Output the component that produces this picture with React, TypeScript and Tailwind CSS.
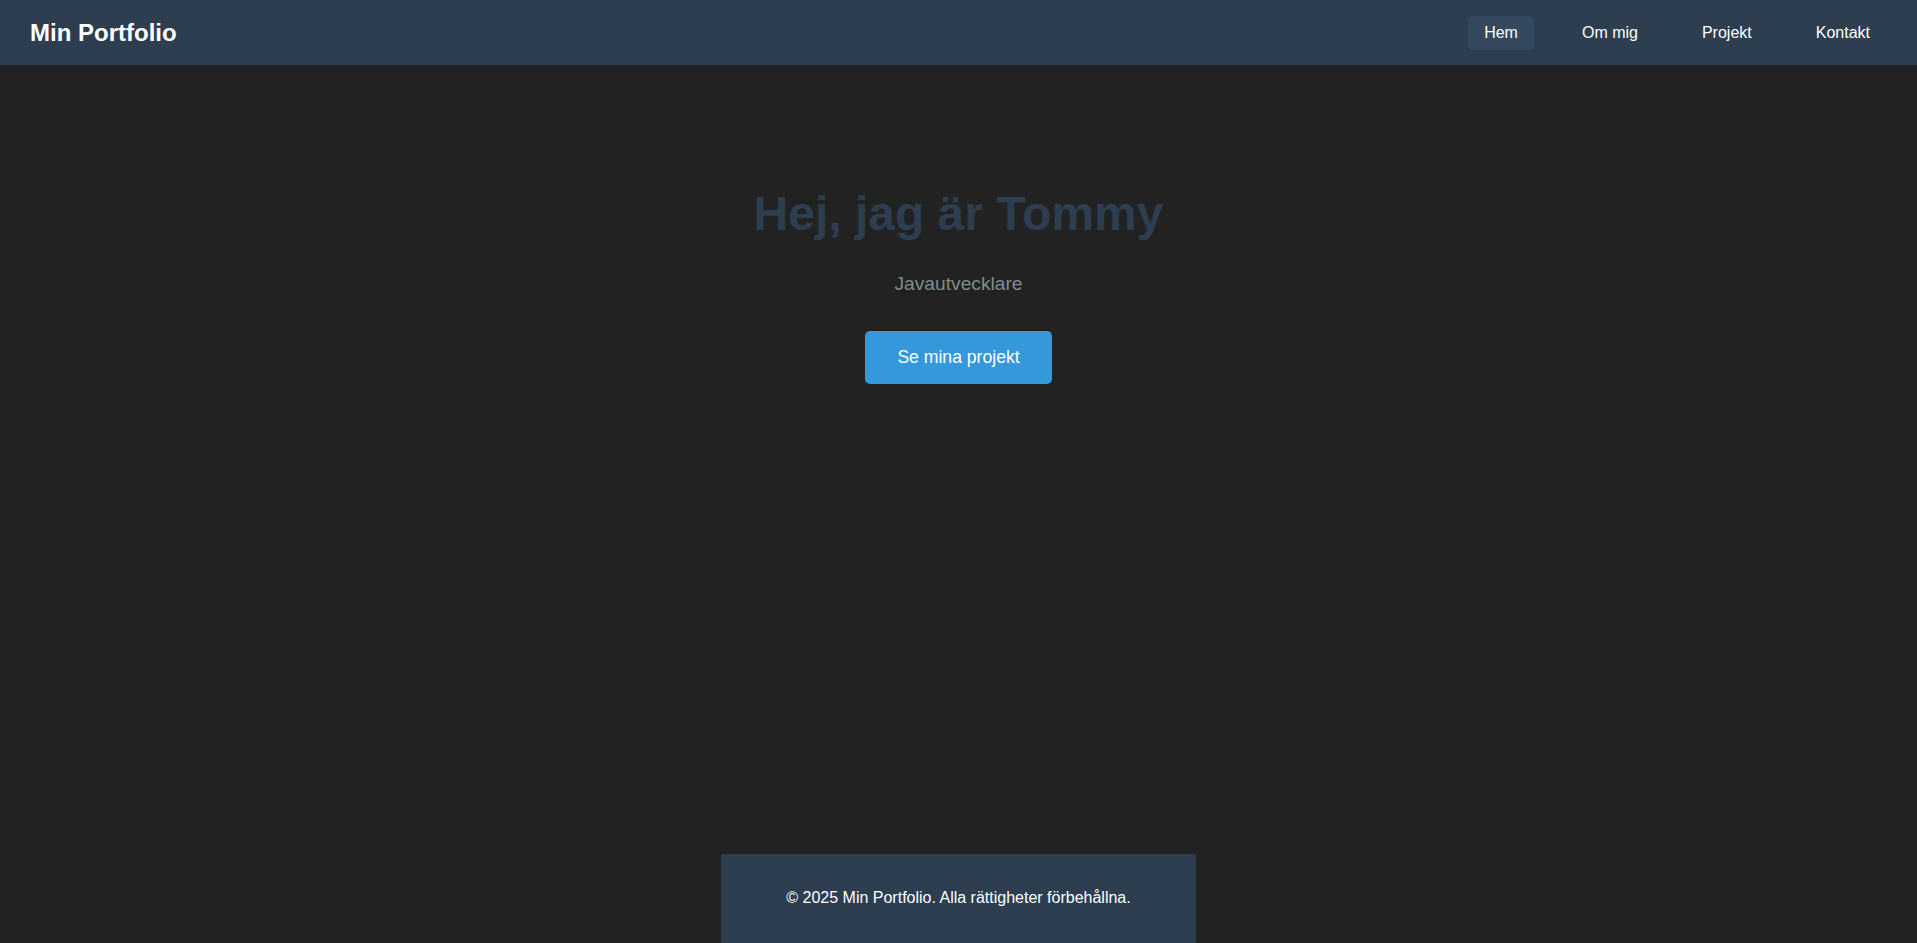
const navItems = ["Hem", "Om mig", "Projekt", "Kontakt"];

const App = () => {
  return (
    <div className="min-h-screen bg-[#222222] flex flex-col font-['Liberation_Sans',Arial,sans-serif]">
      <header className="h-[65px] bg-[#2c3e50] flex items-center justify-between pl-[30px] pr-[31px]">
        <div className="text-2xl leading-[28px] font-bold text-white">Min Portfolio</div>
        <nav className="flex gap-8">
          {navItems.map((item, i) => (
            <a
              key={item}
              href="#"
              className={
                i === 0
                  ? "px-4 py-2 rounded text-white text-base leading-[18px] bg-[#34495e]"
                  : "px-4 py-2 rounded text-white text-base leading-[18px]"
              }
            >
              {item}
            </a>
          ))}
        </nav>
      </header>

      <main className="flex-1 flex flex-col items-center pt-[121px]">
        <h1 className="text-5xl leading-[55px] font-bold text-[#2c3e50]">Hej, jag är Tommy</h1>
        <p className="mt-[32px] text-[1.2rem] leading-[22px] text-[#7f8c8d]">Javautvecklare</p>
        <button className="mt-[36px] bg-[#3498db] text-white text-[1.1rem] leading-[21px] px-8 py-4 rounded-[5px]">
          Se mina projekt
        </button>
      </main>

      <footer className="w-[475px] mx-auto h-[89px] bg-[#2c3e50] text-white text-center pt-[35px] text-base leading-[18px]">
        © 2025 Min Portfolio. Alla rättigheter förbehållna.
      </footer>
    </div>
  );
};

export default App;
